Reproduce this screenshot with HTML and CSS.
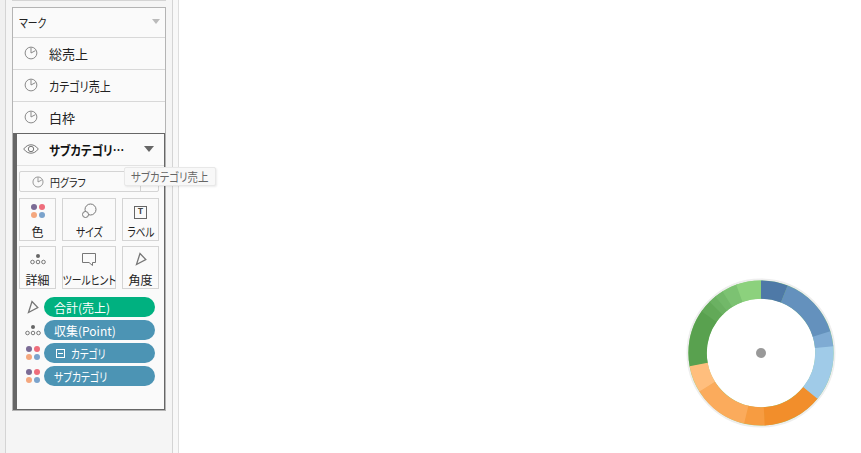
FILE: index.html
```html
<!DOCTYPE html>
<html lang="ja">
<head>
    <meta charset="UTF-8">
    <title>マーク</title>
    <link rel="stylesheet" href="styles.css">
</head>
<body>
    <svg class="defs" width="0" height="0">
        <symbol id="clock" viewBox="0 0 14 14">
            <circle cx="7" cy="7" r="5.9" fill="none" stroke="#8a8a8a"/>
            <path d="M7 1.5V7L11.5 4.6" fill="none" stroke="#8a8a8a"/>
        </symbol>
        <symbol id="dots" viewBox="0 0 16 16">
            <circle cx="4" cy="4" r="3" fill="#7b6b95"/>
            <circle cx="12" cy="4" r="3" fill="#ee6d7c"/>
            <circle cx="4" cy="12" r="3" fill="#f4a77e"/>
            <circle cx="12" cy="12" r="3" fill="#7ba3cc"/>
        </symbol>
        <symbol id="detail" viewBox="0 0 16 12">
            <circle cx="8" cy="3" r="2" fill="#666"/>
            <circle cx="2.5" cy="9" r="1.8" fill="none" stroke="#777"/>
            <circle cx="8" cy="9" r="1.8" fill="none" stroke="#777"/>
            <circle cx="13.5" cy="9" r="1.8" fill="none" stroke="#777"/>
        </symbol>
        <symbol id="angle" viewBox="0 0 12 14">
            <path d="M5 1.500L10.800 7.500L1.500 12.500Z" fill="none" stroke="#777" stroke-width="1.300"/>
        </symbol>
    </svg>

    <div class="gutter"></div>

    <div class="sidebar">
        <div class="top-strip"></div>
        <div class="marks">
            <div class="marks-head">
                <span class="squeeze s82">マーク</span>
                <span class="caret caret-light"></span>
            </div>
            <div class="mark-row"><svg class="clock"><use href="#clock"/></svg>総売上</div>
            <div class="mark-row"><svg class="clock"><use href="#clock"/></svg><span class="squeeze s85">カテゴリ売上</span></div>
            <div class="mark-row last"><svg class="clock"><use href="#clock"/></svg>白枠</div>

            <div class="active">
                <div class="active-head">
                    <svg class="eye" viewBox="0 0 16 10">
                        <path d="M.7 5C3 2 5.400 .8 8 .8S13 2 15.300 5C13 8 10.600 9.200 8 9.200S3 8 .7 5Z" fill="none" stroke="#777"/>
                        <circle cx="8" cy="5" r="2.700" fill="none" stroke="#777"/>
                    </svg>
                    <span class="active-title"><span class="squeeze s88">サブカテゴリ…</span></span>
                    <span class="caret"></span>
                </div>

                <div class="chart-type">
                    <svg class="clock small"><use href="#clock"/></svg>
                    <span class="chart-name"><span class="squeeze s90">円グラフ</span></span>
                    <span class="chart-type-end"></span>
                </div>

                <div class="shelf">
                    <div class="shelf-btn">
                        <svg class="shelf-icon"><use href="#dots"/></svg>
                        <span>色</span>
                    </div>
                    <div class="shelf-btn">
                        <svg class="shelf-icon" viewBox="0 0 16 16">
                            <circle cx="9.500" cy="6.500" r="5.500" fill="none" stroke="#777"/>
                            <circle cx="4.500" cy="11.500" r="3" fill="#fafafa" stroke="#777"/>
                        </svg>
                        <span class="squeeze-mid s82">サイズ</span>
                    </div>
                    <div class="shelf-btn">
                        <span class="label-icon">T</span>
                        <span class="squeeze-mid s80">ラベル</span>
                    </div>
                    <div class="shelf-btn">
                        <svg class="shelf-icon"><use href="#detail"/></svg>
                        <span>詳細</span>
                    </div>
                    <div class="shelf-btn">
                        <svg class="shelf-icon" viewBox="0 0 16 16">
                            <path d="M1.500 2.500H14.500V11.500H11.500V14.500L8 11.500H1.500Z" fill="none" stroke="#777"/>
                        </svg>
                        <span class="squeeze-mid s82">ツールヒント</span>
                    </div>
                    <div class="shelf-btn">
                        <svg class="shelf-icon angle"><use href="#angle"/></svg>
                        <span>角度</span>
                    </div>
                </div>

                <div class="pills">
                    <div class="pill-row">
                        <svg class="pill-icon angle"><use href="#angle"/></svg>
                        <div class="pill green">合計(売上)</div>
                    </div>
                    <div class="pill-row">
                        <svg class="pill-icon"><use href="#detail"/></svg>
                        <div class="pill">収集(Point)</div>
                    </div>
                    <div class="pill-row">
                        <svg class="pill-icon"><use href="#dots"/></svg>
                        <div class="pill"><span class="collapse"></span><span class="squeeze s80">カテゴリ</span></div>
                    </div>
                    <div class="pill-row">
                        <svg class="pill-icon"><use href="#dots"/></svg>
                        <div class="pill"><span class="squeeze s82">サブカテゴリ</span></div>
                    </div>
                </div>
            </div>
        </div>
        <div class="tooltip"><span class="squeeze s87">サブカテゴリ売上</span></div>
    </div>

    <div class="divider"></div>

    <div class="canvas">
        <svg class="donut" width="150" height="150" viewBox="0 0 150 150">
            <circle cx="75" cy="75" r="73.500" fill="none" stroke="#eeeeee" stroke-width="2"/>
            <g fill="none" stroke-width="18.400" transform="rotate(-90 75 75)">
                <circle pathLength="360" cx="75" cy="75" r="63.400" stroke="#8cd17d"/>
                <circle pathLength="360" cx="75" cy="75" r="63.400" stroke="#59a14f" stroke-dasharray="47 360" stroke-dashoffset="-259"/>
                <circle pathLength="360" cx="75" cy="75" r="63.400" stroke="#62a958" stroke-dasharray="11 360" stroke-dashoffset="-305"/>
                <circle pathLength="360" cx="75" cy="75" r="63.400" stroke="#6bb162" stroke-dasharray="7 360" stroke-dashoffset="-315"/>
                <circle pathLength="360" cx="75" cy="75" r="63.400" stroke="#72b869" stroke-dasharray="8 360" stroke-dashoffset="-321"/>
                <circle pathLength="360" cx="75" cy="75" r="63.400" stroke="#7cc272" stroke-dasharray="13 360" stroke-dashoffset="-328"/>
                <circle pathLength="360" cx="75" cy="75" r="63.400" stroke="#8cd17d" stroke-dasharray="20 360" stroke-dashoffset="-340"/>
                <circle pathLength="360" cx="75" cy="75" r="63.400" stroke="#ffbe7d" stroke-dasharray="22 360" stroke-dashoffset="-237.500"/>
                <circle pathLength="360" cx="75" cy="75" r="63.400" stroke="#fbab5c" stroke-dasharray="45 360" stroke-dashoffset="-193"/>
                <circle pathLength="360" cx="75" cy="75" r="63.400" stroke="#f79c41" stroke-dasharray="17 360" stroke-dashoffset="-176.500"/>
                <circle pathLength="360" cx="75" cy="75" r="63.400" stroke="#f28e2b" stroke-dasharray="48.500 360" stroke-dashoffset="-128.500"/>
                <circle pathLength="360" cx="75" cy="75" r="63.400" stroke="#a0cbe8" stroke-dasharray="45 360" stroke-dashoffset="-84"/>
                <circle pathLength="360" cx="75" cy="75" r="63.400" stroke="#7fabd3" stroke-dasharray="12.500 360" stroke-dashoffset="-72"/>
                <circle pathLength="360" cx="75" cy="75" r="63.400" stroke="#6491bd" stroke-dasharray="51 360" stroke-dashoffset="-21.500"/>
                <circle pathLength="360" cx="75" cy="75" r="63.400" stroke="#4e79a7" stroke-dasharray="21.500 360"/>
            </g>
            <circle cx="75" cy="75" r="5" fill="#999999"/>
        </svg>
    </div>
</body>
</html>
```

FILE: styles.css
```css
* {
    box-sizing: border-box;
}
html, body {
    margin: 0;
    height: 100%;
    overflow: hidden;
}
body {
    display: flex;
    background-color: #f0f0f0;
    color: #222;
    font-family: "Noto Sans CJK JP", "Liberation Sans", sans-serif;
    font-size: 13px;
    font-feature-settings: "palt";
}
.defs {
    position: absolute;
}

/* kana in the original font is much narrower than Noto */
.squeeze, .squeeze-mid {
    display: inline-block;
    white-space: nowrap;
    transform-origin: left center;
}
.squeeze-mid {
    transform-origin: center center;
}
.s80 { transform: scaleX(.8); }
.s82 { transform: scaleX(.82); }
.s85 { transform: scaleX(.85); }
.s87 { transform: scaleX(.87); }
.s88 { transform: scaleX(.88); }
.s90 { transform: scaleX(.9); }

.gutter {
    width: 5px;
}
.sidebar {
    position: relative;
    z-index: 1;
    width: 168px;
    padding: 2px 6px 0;
    background-color: #f5f5f5;
    border-left: 1px solid #d4d4d4;
    border-right: 1px solid #d4d4d4;
}
.top-strip {
    position: absolute;
    top: 0;
    left: 6px;
    right: 6px;
    height: 1px;
    background-color: #d4d4d4;
}
.divider {
    width: 6px;
    background-color: #f8f8f8;
    border-right: 1px solid #dedede;
}
.canvas {
    position: relative;
    flex: 1;
    background-color: #fff;
}
.donut {
    position: absolute;
    left: 507px;
    top: 278px;
}

/* marks card */
.marks {
    width: 154px;
    margin-top: 5px;
    background-color: #fafafa;
    border: 1px solid #b4b4b4;
}
.marks-head {
    display: flex;
    justify-content: space-between;
    align-items: center;
    height: 30px;
    padding: 0 5px 0 6px;
    font-size: 12px;
    border-bottom: 1px solid #d8d8d8;
}
.mark-row {
    display: flex;
    align-items: center;
    height: 32px;
    padding-left: 11px;
    border-bottom: 1px solid #d8d8d8;
}
.mark-row.last {
    height: 31px;
    border-bottom: none;
}
.clock {
    width: 14px;
    height: 14px;
    margin-right: 11px;
    margin-bottom: 2px;
}
.clock.small {
    width: 12px;
    height: 12px;
    margin: 0 6px 0 12px;
}
.caret {
    width: 0;
    height: 0;
    border-left: 5px solid transparent;
    border-right: 5px solid transparent;
    border-top: 6px solid #666;
}
.caret-light {
    border-left-width: 4px;
    border-right-width: 4px;
    border-top: 5px solid #bbb;
    margin-bottom: 2px;
}

/* selected mark layer */
.active {
    height: 277px;
    padding: 0 5px 0 2px;
    border: 1px solid #666;
    border-left-width: 4px;
}
.active-head {
    display: flex;
    align-items: center;
    height: 32px;
    margin: 0 -5px 0 -2px;
    padding: 0 10px 1px 6px;
    border-bottom: 1px solid #e2e2e2;
}
.eye {
    width: 16px;
    height: 10px;
    margin-right: 10px;
}
.active-title {
    flex: 1;
    font-weight: 700;
    color: #111;
    white-space: nowrap;
}
.chart-type {
    display: flex;
    align-items: center;
    height: 21px;
    margin-top: 5px;
    font-size: 11px;
    background-color: #fafafa;
    border: 1px solid #d4d4d4;
    border-radius: 2px;
}
.chart-name {
    flex: 1;
}
.chart-type-end {
    width: 18px;
    height: 100%;
    border-left: 1px solid #d4d4d4;
}
.shelf {
    display: grid;
    grid-template-columns: 37px 54px 37px;
    grid-auto-rows: 43px;
    gap: 5px 6px;
    margin-top: 6px;
}
.shelf-btn {
    display: flex;
    flex-direction: column;
    align-items: center;
    justify-content: flex-end;
    border: 1px solid #d4d4d4;
    font-size: 12px;
    line-height: 17px;
    white-space: nowrap;
}
.shelf-icon {
    width: 16px;
    height: 16px;
    margin-bottom: 4px;
}
.shelf-icon.angle {
    width: 12px;
    height: 14px;
    margin-bottom: 5px;
}
.label-icon {
    display: block;
    width: 13px;
    height: 13px;
    margin-bottom: 4px;
    border: 1px solid #666;
    color: #444;
    font-family: "Liberation Mono", monospace;
    font-size: 9px;
    font-weight: 700;
    line-height: 11px;
    text-align: center;
}

/* encoding pills */
.pills {
    display: flex;
    flex-direction: column;
    gap: 3px;
    margin-top: 8px;
}
.pill-row {
    display: flex;
    align-items: center;
    gap: 3px;
    padding-left: 6px;
}
.pill-icon {
    width: 16px;
    height: 16px;
}
.pill-icon.angle {
    height: 14px;
}
.pill {
    display: flex;
    align-items: center;
    width: 111px;
    height: 20px;
    padding-left: 10px;
    background-color: #4c94b4;
    border-radius: 10px;
    color: #fff;
    font-size: 12px;
}
.pill.green {
    background-color: #00b180;
}
.collapse {
    position: relative;
    width: 9px;
    height: 9px;
    margin: 0 6px 0 2px;
    border: 1px solid #fff;
}
.collapse::after {
    content: "";
    position: absolute;
    left: 1px;
    right: 1px;
    top: 3px;
    height: 1px;
    background-color: #fff;
}

.tooltip {
    position: absolute;
    left: 118px;
    top: 167px;
    width: 92px;
    height: 19px;
    padding-left: 6px;
    background-color: #f8f8f8;
    border: 1px solid #e8e8e8;
    border-radius: 2px;
    box-shadow: 1px 1px 2px rgba(0, 0, 0, .08);
    color: #666;
    font-size: 12px;
    line-height: 17px;
    white-space: nowrap;
}
```
